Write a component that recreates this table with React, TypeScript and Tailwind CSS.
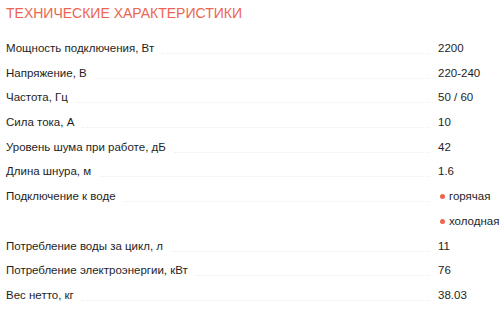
const specs: { label: string; values: string[]; bullets?: boolean }[] = [
  { label: "Мощность подключения, Вт", values: ["2200"] },
  { label: "Напряжение, В", values: ["220-240"] },
  { label: "Частота, Гц", values: ["50 / 60"] },
  { label: "Сила тока, А", values: ["10"] },
  { label: "Уровень шума при работе, дБ", values: ["42"] },
  { label: "Длина шнура, м", values: ["1.6"] },
  { label: "Подключение к воде", values: ["горячая", "холодная"], bullets: true },
  { label: "Потребление воды за цикл, л", values: ["11"] },
  { label: "Потребление электроэнергии, кВт", values: ["76"] },
  { label: "Вес нетто, кг", values: ["38.03"] },
];

const App: React.FC = () => {
  return (
    <div className="w-[500px] h-[321px] bg-white px-[6px] font-['Liberation_Sans',Arial,sans-serif] text-[#1e1e1e]">
      <h2 className="pt-[4px] text-[14px] leading-[18px] uppercase text-[#ec6550]">
        Технические характеристики
      </h2>
      <div className="mt-[14px] flex flex-col">
        {specs.map((row, i) => (
          <div key={i} className="flex items-start">
            <div className="flex flex-1 items-start h-[24.7px] leading-[24.7px]">
              <span className="text-[11.5px] whitespace-nowrap">{row.label}</span>
              <span className="flex-1 ml-[8px] mr-[8px] mt-[17px] border-b border-dotted border-[#efefef]" />
            </div>
            <div className="w-[56px] flex flex-col text-[11.5px]">
              {row.values.map((v, j) => (
                <div key={j} className="h-[24.7px] leading-[24.7px] flex items-center gap-[4px] whitespace-nowrap">
                  {row.bullets && <span className="shrink-0 w-[5px] h-[5px] rounded-full bg-[#ec6550] ml-[2px]" />}
                  <span>{v}</span>
                </div>
              ))}
            </div>
          </div>
        ))}
      </div>
    </div>
  );
};

export default App;
